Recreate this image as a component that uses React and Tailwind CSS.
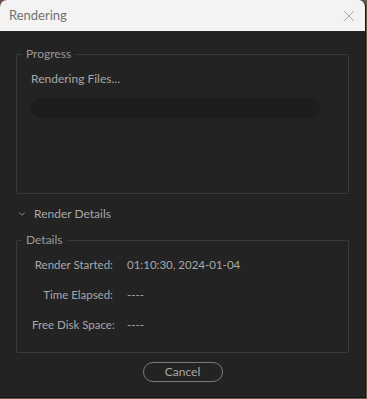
import { X, ChevronDown } from "lucide-react";

const Row = ({ label, value }) => (
  <div className="flex items-center h-[30px]">
    <span className="w-[81px] text-right whitespace-nowrap">{label}</span>
    <span className="ml-[14px]">{value}</span>
  </div>
);

export default function App() {
  return (
    <div className="w-[367px] h-[399px] bg-[#6e5448] font-['Lato',sans-serif]">
      <div className="w-[366px] h-[398px] rounded-t-[7px] overflow-hidden flex flex-col bg-[#232323] border-r border-b border-[#151515]">
        {/* title bar */}
        <div className="h-[31px] bg-[#f3f3f3] flex items-center justify-between pl-[9px] pr-[7px]">
          <span className="text-[13px] text-[#727272]">Rendering</span>
          <X className="w-[18px] h-[18px] text-[#8a8a8a]" strokeWidth={1} />
        </div>

        <div className="flex-1 flex flex-col px-[16px] pt-[14px] text-[11.5px] text-[#a8a8a8]">
          <fieldset className="border border-[#3a3a3a] rounded-[2px] h-[149px]">
            <legend className="ml-[5px] px-[4px] text-[#9a9a9a] text-[12px]">Progress</legend>
            <div className="pl-[14px] pr-[28px]">
              <div className="mt-[7px] leading-[17px] text-[12px]">Rendering Files...</div>
              <div className="mt-[11px] h-[20px] rounded-full bg-[#1d1d1d]"></div>
            </div>
          </fieldset>

          <div className="flex items-center h-[26px] mt-[7px]">
            <ChevronDown className="w-[10px] h-[10px] ml-[1px] text-[#9a9a9a]" strokeWidth={2} />
            <span className="ml-[7px] text-[12px]">Render Details</span>
          </div>

          <fieldset className="border border-[#3a3a3a] rounded-[2px] h-[122px] mt-[4px]">
            <legend className="ml-[5px] px-[4px] text-[#9a9a9a] text-[12px]">Details</legend>
            <div className="mt-[1px] pl-[15px]">
              <Row label="Render Started:" value="01:10:30, 2024-01-04" />
              <Row label="Time Elapsed:" value="----" />
              <Row label="Free Disk Space:" value="----" />
            </div>
          </fieldset>

          <div className="flex justify-center mt-[9px]">
            <button className="w-[80px] h-[20px] rounded-full border border-[#7a7a7a] text-[#a8a8a8] text-[12px] leading-none">
              Cancel
            </button>
          </div>
        </div>
      </div>
    </div>
  );
}
